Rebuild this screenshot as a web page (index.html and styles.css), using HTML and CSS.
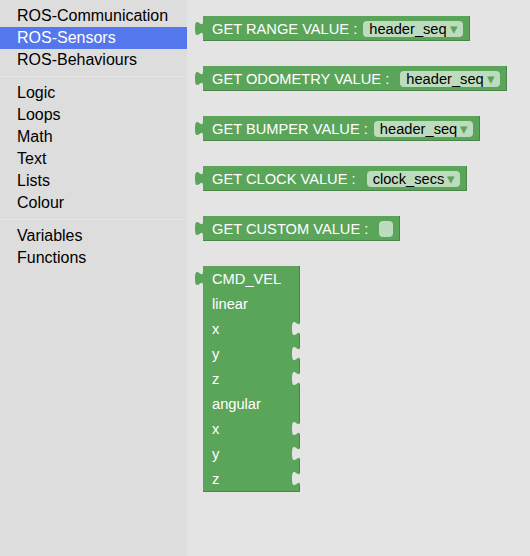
FILE: index.html
```html
<!DOCTYPE html>
<html>
<head>
<meta charset="utf-8">
<link rel="stylesheet" href="styles.css">
</head>
<body>
<div class="app">
  <div class="toolbox">
    <div class="item">ROS-Communication</div>
    <div class="item sel">ROS-Sensors</div>
    <div class="item">ROS-Behaviours</div>
    <div class="sep"></div>
    <div class="item">Logic</div>
    <div class="item">Loops</div>
    <div class="item">Math</div>
    <div class="item">Text</div>
    <div class="item">Lists</div>
    <div class="item">Colour</div>
    <div class="sep"></div>
    <div class="item">Variables</div>
    <div class="item">Functions</div>
  </div>
  <div class="flyout">
    <div class="block">
      <svg class="tab" viewBox="0 0 9 15"><path d="M9,0 H8 C8,10 0,-8 0,7.5 S8,5 8,15 H9 Z"/></svg>
      <span class="label">GET RANGE VALUE :</span>
      <span class="dd">header_seq<span class="arrow">▾</span></span>
    </div>
    <div class="block">
      <svg class="tab" viewBox="0 0 9 15"><path d="M9,0 H8 C8,10 0,-8 0,7.5 S8,5 8,15 H9 Z"/></svg>
      <span class="label wide">GET ODOMETRY VALUE :</span>
      <span class="dd">header_seq<span class="arrow">▾</span></span>
    </div>
    <div class="block">
      <svg class="tab" viewBox="0 0 9 15"><path d="M9,0 H8 C8,10 0,-8 0,7.5 S8,5 8,15 H9 Z"/></svg>
      <span class="label">GET BUMPER VALUE :</span>
      <span class="dd">header_seq<span class="arrow">▾</span></span>
    </div>
    <div class="block">
      <svg class="tab" viewBox="0 0 9 15"><path d="M9,0 H8 C8,10 0,-8 0,7.5 S8,5 8,15 H9 Z"/></svg>
      <span class="label wide">GET CLOCK VALUE :</span>
      <span class="dd">clock_secs<span class="arrow">▾</span></span>
    </div>
    <div class="block">
      <svg class="tab" viewBox="0 0 9 15"><path d="M9,0 H8 C8,10 0,-8 0,7.5 S8,5 8,15 H9 Z"/></svg>
      <span class="label wide">GET CUSTOM VALUE :</span>
      <span class="input"></span>
    </div>
    <div class="block big">
      <svg class="tab" viewBox="0 0 9 15"><path d="M9,0 H8 C8,10 0,-8 0,7.5 S8,5 8,15 H9 Z"/></svg>
      <div class="row">CMD_VEL</div>
      <div class="row">linear</div>
      <div class="row">x<svg class="notch" viewBox="0 0 9 15"><path d="M9,0 H8 C8,10 0,-8 0,7.5 S8,5 8,15 H9 Z"/></svg></div>
      <div class="row">y<svg class="notch" viewBox="0 0 9 15"><path d="M9,0 H8 C8,10 0,-8 0,7.5 S8,5 8,15 H9 Z"/></svg></div>
      <div class="row">z<svg class="notch" viewBox="0 0 9 15"><path d="M9,0 H8 C8,10 0,-8 0,7.5 S8,5 8,15 H9 Z"/></svg></div>
      <div class="row">angular</div>
      <div class="row">x<svg class="notch" viewBox="0 0 9 15"><path d="M9,0 H8 C8,10 0,-8 0,7.5 S8,5 8,15 H9 Z"/></svg></div>
      <div class="row">y<svg class="notch" viewBox="0 0 9 15"><path d="M9,0 H8 C8,10 0,-8 0,7.5 S8,5 8,15 H9 Z"/></svg></div>
      <div class="row">z<svg class="notch" viewBox="0 0 9 15"><path d="M9,0 H8 C8,10 0,-8 0,7.5 S8,5 8,15 H9 Z"/></svg></div>
    </div>
  </div>
</div>
</body>
</html>
```
FILE: styles.css
```css
body {
  margin: 0;
  font-family: "Liberation Sans", Arial, sans-serif;
}
.app {
  display: flex;
  width: 530px;
  height: 556px;
  overflow: hidden;
}
.toolbox {
  width: 187px;
  flex: none;
  background: #ddd;
  padding-top: 5px;
  box-sizing: border-box;
}
.item {
  height: 22px;
  line-height: 22px;
  padding-left: 17px;
  font-size: 16px;
  color: #000;
  white-space: nowrap;
}
.item.sel {
  background: #57e;
  color: #fff;
}
.sep {
  border-bottom: 1px solid #e5e5e5;
  margin: 5px 0;
}
.flyout {
  flex: 1;
  background: #e4e4e4;
  padding: 16px 0 0 16px;
  display: flex;
  flex-direction: column;
  align-items: flex-start;
  gap: 25px;
}
.block {
  position: relative;
  height: 25px;
  box-sizing: border-box;
  background: #5ba55b;
  border-right: 1px solid #498449;
  border-bottom: 1px solid #498449;
  display: flex;
  align-items: center;
  padding: 2px 6px 0 9px;
  color: #fff;
  font-size: 11pt;
  white-space: nowrap;
}
.tab {
  position: absolute;
  left: -8px;
  top: 5px;
  width: 9px;
  height: 15px;
  fill: #5ba55b;
}
.label {
  margin-right: 6px;
}
.label.wide {
  margin-right: 11px;
}
.dd {
  height: 16px;
  line-height: 16px;
  padding: 0 5px 0 6px;
  border-radius: 4px;
  background: #bddbbd;
  color: #000;
}
.arrow {
  color: #5ba55b;
  font-size: 11pt;
  margin-left: 3px;
}
.input {
  width: 14px;
  height: 16px;
  border-radius: 4px;
  background: #bddbbd;
}
.block.big {
  height: auto;
  width: 97px;
  flex-direction: column;
  align-items: stretch;
  padding: 0;
}
.row {
  position: relative;
  height: 25px;
  line-height: 26px;
  padding-left: 9px;
}
.notch {
  position: absolute;
  right: -2px;
  top: 5px;
  width: 9px;
  height: 15px;
  fill: #e4e4e4;
}
```
